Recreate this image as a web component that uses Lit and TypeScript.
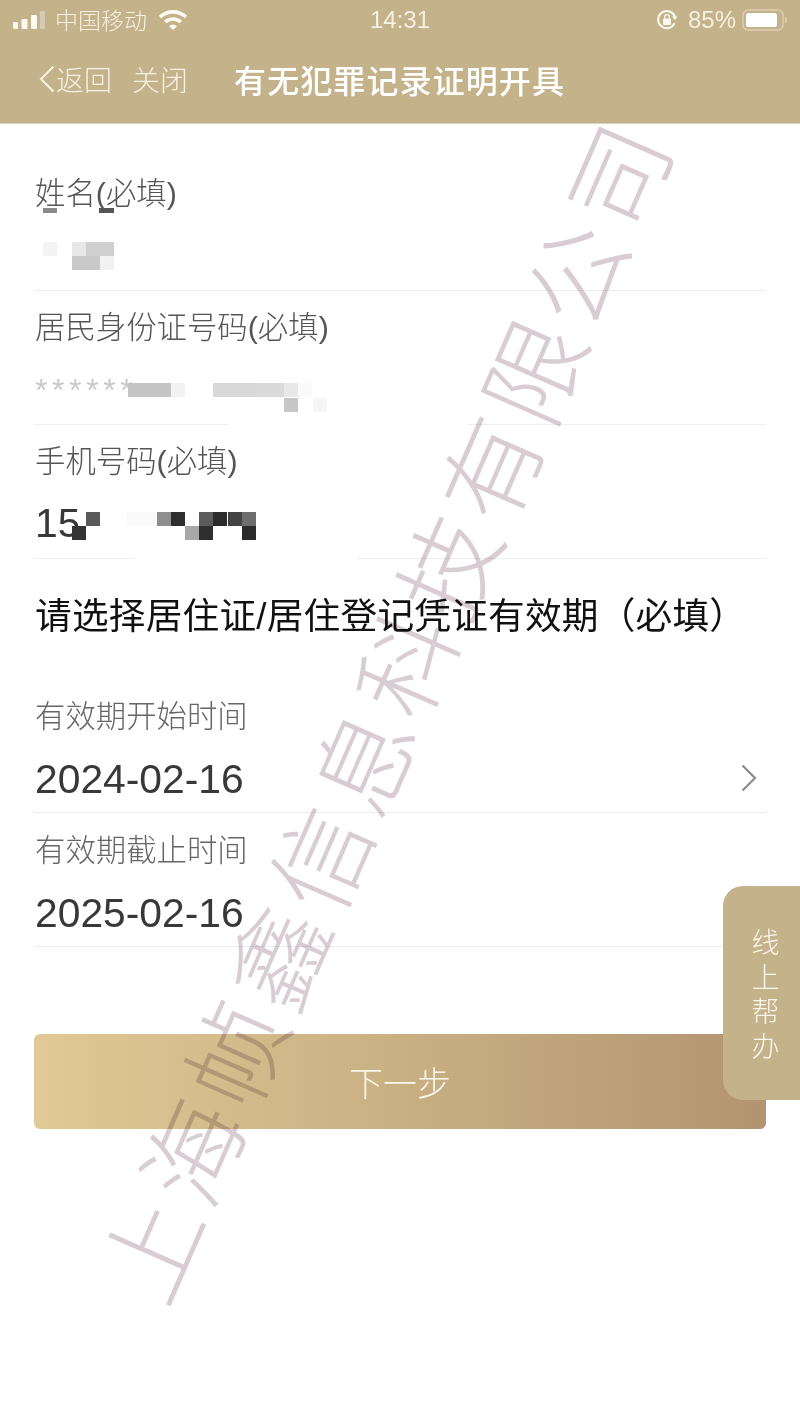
import { LitElement, html, css, svg } from "lit";
import { customElement } from "lit/decorators.js";

// redaction blocks on the photo: x, y, w, h, colour
type Block = [number, number, number, number, string];

const S = 14.3;
const blocks: Block[] = [
  // name
  [43, 208, 14, 5, "#8a8a8a"], [99, 208, 15, 5, "#555555"],
  [43, 242, S, S, "#f3f3f3"], [72, 242, S, S, "#e8e8e8"], [86, 242, 28, S, "#cfcfcf"],
  [72, 256, 28, S, "#c9c9c9"], [100, 256, S, S, "#f2f2f2"],
  // id number
  [128, 383, 43, S, "#c4c4c4"], [171, 383, S, S, "#f2f2f2"],
  [213, 383, 43, S, "#d8d8d8"], [256, 383, 28, S, "#dadada"], [284, 383, S, S, "#e8e8e8"], [298, 383, S, S, "#fafafa"],
  [284, 398, S, S, "#c6c6c6"], [313, 398, S, S, "#f6f6f6"],
  // phone
  [86, 512, S, S, "#595959"], [72, 526, S, S, "#333333"], [127, 512, 30, S, "#fafafa"],
  [157, 512, S, S, "#8e8e8e"], [171, 512, S, S, "#2e2e2e"], [199, 512, S, S, "#5c5c5c"],
  [213, 512, S, S, "#2c2c2c"], [228, 512, S, S, "#434343"], [242, 512, S, S, "#6d6d6d"],
  [185, 526, S, S, "#a8a8a8"], [199, 526, S, S, "#2f2f2f"], [242, 526, S, S, "#2b2b2b"],
  // rules wiped out by the smudging
  [228, 420, 240, 10, "#ffffff"], [135, 552, 222, 10, "#ffffff"],
];

const fields = [
  { label: "姓名(必填)", value: "", cls: "" },
  { label: "居民身份证号码(必填)", value: "******", cls: "stars" },
  { label: "手机号码(必填)", value: "15", cls: "" },
];

@customElement("app-root")
export class AppRoot extends LitElement {
  static styles = css`
    :host {
      display: block;
      position: relative;
      width: 800px;
      height: 1422px;
      overflow: hidden;
      background: #fff;
      font-family: "Liberation Sans", "Noto Sans CJK SC", sans-serif;
      text-spacing-trim: space-all;
    }
    .top {
      height: 124px;
      box-sizing: border-box;
      background: #c4b28a;
      border-bottom: 1px solid #d9d2c0;
      color: #fbf7ec;
    }
    .status {
      height: 40px;
      display: grid;
      grid-template-columns: 1fr auto 1fr;
      align-items: center;
      padding: 0 12px;
      font-size: 24px;
      color: #f6f0e0;
    }
    .left {
      display: flex;
      align-items: center;
    }
    .carrier {
      margin: -2px 0 0 9px;
      font-size: 23px;
      font-weight: 300;
    }
    .wifi {
      margin-left: 11px;
    }
    .right {
      display: flex;
      justify-content: flex-end;
      align-items: center;
      gap: 10px;
    }
    .nav {
      height: 83px;
      display: flex;
      align-items: center;
      padding: 0 0 6px 38px;
      box-sizing: border-box;
    }
    .back {
      display: flex;
      align-items: center;
      font-size: 28px;
      font-weight: 300;
      color: #f6f0e0;
    }
    .close {
      margin-left: 20px;
      font-size: 28px;
      font-weight: 300;
      color: #f6f0e0;
    }
    .title {
      margin-left: 46px;
      font-size: 32px;
      font-weight: 500;
      letter-spacing: 1.1px;
      color: #fff;
    }
    .form {
      padding: 0 34px;
    }
    .field {
      height: 134px;
      box-sizing: border-box;
      border-bottom: 1px solid #eeeeee;
      padding-top: 16px;
    }
    .field:first-child {
      height: 167px;
      padding-top: 49px;
    }
    .label {
      padding-left: 1px;
      font-size: 30.4px;
      font-weight: 300;
      line-height: 40px;
      color: #555;
    }
    .value {
      height: 50px;
      margin-top: 17px;
      padding-left: 1px;
      font-size: 40.8px;
      line-height: 50px;
      color: #383838;
    }
    .value.stars {
      margin-top: 18px;
      font-size: 32px;
      letter-spacing: 4.6px;
      color: #c9c9c9;
    }
    .section {
      height: 120px;
      box-sizing: border-box;
      padding: 34px 0 0 1px;
      font-size: 36.7px;
      letter-spacing: 0.2px;
      line-height: 48px;
      color: #111;
      white-space: nowrap;
    }
    .date {
      padding-top: 17px;
    }
    .date .label {
      color: #666;
    }
    .date .value {
      margin-top: 18px;
    }
    .pick {
      display: flex;
      justify-content: space-between;
      align-items: center;
    }
    .pick svg {
      margin: -3px 8px 0 0;
    }
    .next {
      display: flex;
      align-items: center;
      justify-content: center;
      height: 95px;
      margin-top: 87px;
      border-radius: 6px;
      background: linear-gradient(90deg, #e0c996, #c8b083 50%, #b39470);
      color: #fbf6ea;
      font-size: 34px;
      font-weight: 300;
    }
    .help {
      position: absolute;
      left: 723px;
      top: 886px;
      width: 77px;
      height: 214px;
      box-sizing: border-box;
      padding: 42px 0 0 2px;
      border-radius: 20px 0 0 20px;
      background: #c4b28a;
      color: #fbf6ea;
      font-size: 28px;
      font-weight: 300;
      letter-spacing: 6.9px;
      writing-mode: vertical-rl;
      display: flex;
      align-items: center;
    }
    .block {
      position: absolute;
    }
    .mark {
      position: absolute;
      left: 382px;
      top: 708px;
      transform: translate(-50%, -50%) rotate(-66.4deg);
      font-family: "Noto Sans CJK SC", sans-serif;
      font-size: 100px;
      font-weight: 200;
      letter-spacing: 6.4px;
      line-height: 1;
      white-space: nowrap;
      color: #d8cdd3;
      mix-blend-mode: multiply;
      pointer-events: none;
    }
  `;

  render() {
    return html`
      <div class="top">
        <div class="status">
          <div class="left">
            <svg width="34" height="22" viewBox="0 0 34 22">
              <rect x="1" y="13" width="5" height="7" rx="1.2" fill="#fdfaf2" />
              <rect x="9.5" y="10" width="6" height="10" rx="1.2" fill="#fdfaf2" />
              <rect x="19" y="6" width="6" height="14" rx="1.2" fill="#fdfaf2" />
              <rect x="28" y="2" width="5" height="18" rx="1.2" fill="#d6cbb0" />
            </svg>
            <span class="carrier">中国移动</span>
            <svg class="wifi" width="30" height="22" viewBox="0 0 30 22">
              ${svg`<path d="M2 8a19 19 0 0 1 26 0" fill="none" stroke="#fdfaf2" stroke-width="3.6"/>
              <path d="M7.2 13a11.5 11.5 0 0 1 15.6 0" fill="none" stroke="#fdfaf2" stroke-width="3.6"/>
              <path d="M11 17.2a5.6 5.6 0 0 1 8 0L15 21z" fill="#fdfaf2"/>`}
            </svg>
          </div>
          <span>14:31</span>
          <div class="right">
            <svg width="22" height="22" viewBox="0 0 22 22">
              <path d="M18.6 14.2A8.6 8.6 0 1 1 19 8" fill="none" stroke="#fdfaf2" stroke-width="2" />
              <path d="M16 7.5h5.5L19 11z" fill="#fdfaf2" />
              <rect x="7" y="9.5" width="8" height="6.5" rx="1" fill="#fdfaf2" />
              <path d="M8.6 9.5V8a2.4 2.4 0 0 1 4.8 0v1.5" fill="none" stroke="#fdfaf2" stroke-width="1.3" />
            </svg>
            <span>85%</span>
            <svg width="46" height="24" viewBox="0 0 46 24" style="margin-left:-4px">
              <rect x="1" y="2" width="40" height="20" rx="5" fill="none" stroke="#dccfb3" stroke-width="1.4" />
              <rect x="4" y="5" width="31" height="14" rx="2.6" fill="#fff" />
              <path d="M43 9c1.5.4 2 1.6 2 3s-.5 2.6-2 3z" fill="#dccfb3" />
            </svg>
          </div>
        </div>
        <div class="nav">
          <div class="back">
            <svg width="18" height="30" viewBox="0 0 18 30">
              <path d="M15.5 2.5 3 15l12.5 12.5" fill="none" stroke="#f6f0e0" stroke-width="2.2" />
            </svg>
            返回
          </div>
          <div class="close">关闭</div>
          <div class="title">有无犯罪记录证明开具</div>
        </div>
      </div>

      <div class="form">
        ${fields.map(
          (f) => html`
            <div class="field">
              <div class="label">${f.label}</div>
              <div class="value ${f.cls}">${f.value}</div>
            </div>
          `
        )}
        <div class="section">请选择居住证/居住登记凭证有效期（必填）</div>
        <div class="field date">
          <div class="label">有效期开始时间</div>
          <div class="value pick">
            <span>2024-02-16</span>
            <svg width="18" height="30" viewBox="0 0 18 30">
              <path d="M2.5 2.5 15 15 2.5 27.5" fill="none" stroke="#8c8c8c" stroke-width="2.2" />
            </svg>
          </div>
        </div>
        <div class="field date">
          <div class="label">有效期截止时间</div>
          <div class="value">2025-02-16</div>
        </div>
        <div class="next">下一步</div>
      </div>

      ${blocks.map(
        ([x, y, w, h, c]) =>
          html`<i class="block" style="left:${x}px;top:${y}px;width:${w}px;height:${h}px;background:${c}"></i>`
      )}
      <div class="help">线上帮办</div>
      <div class="mark">上海帧鑫信息科技有限公司</div>
    `;
  }
}
